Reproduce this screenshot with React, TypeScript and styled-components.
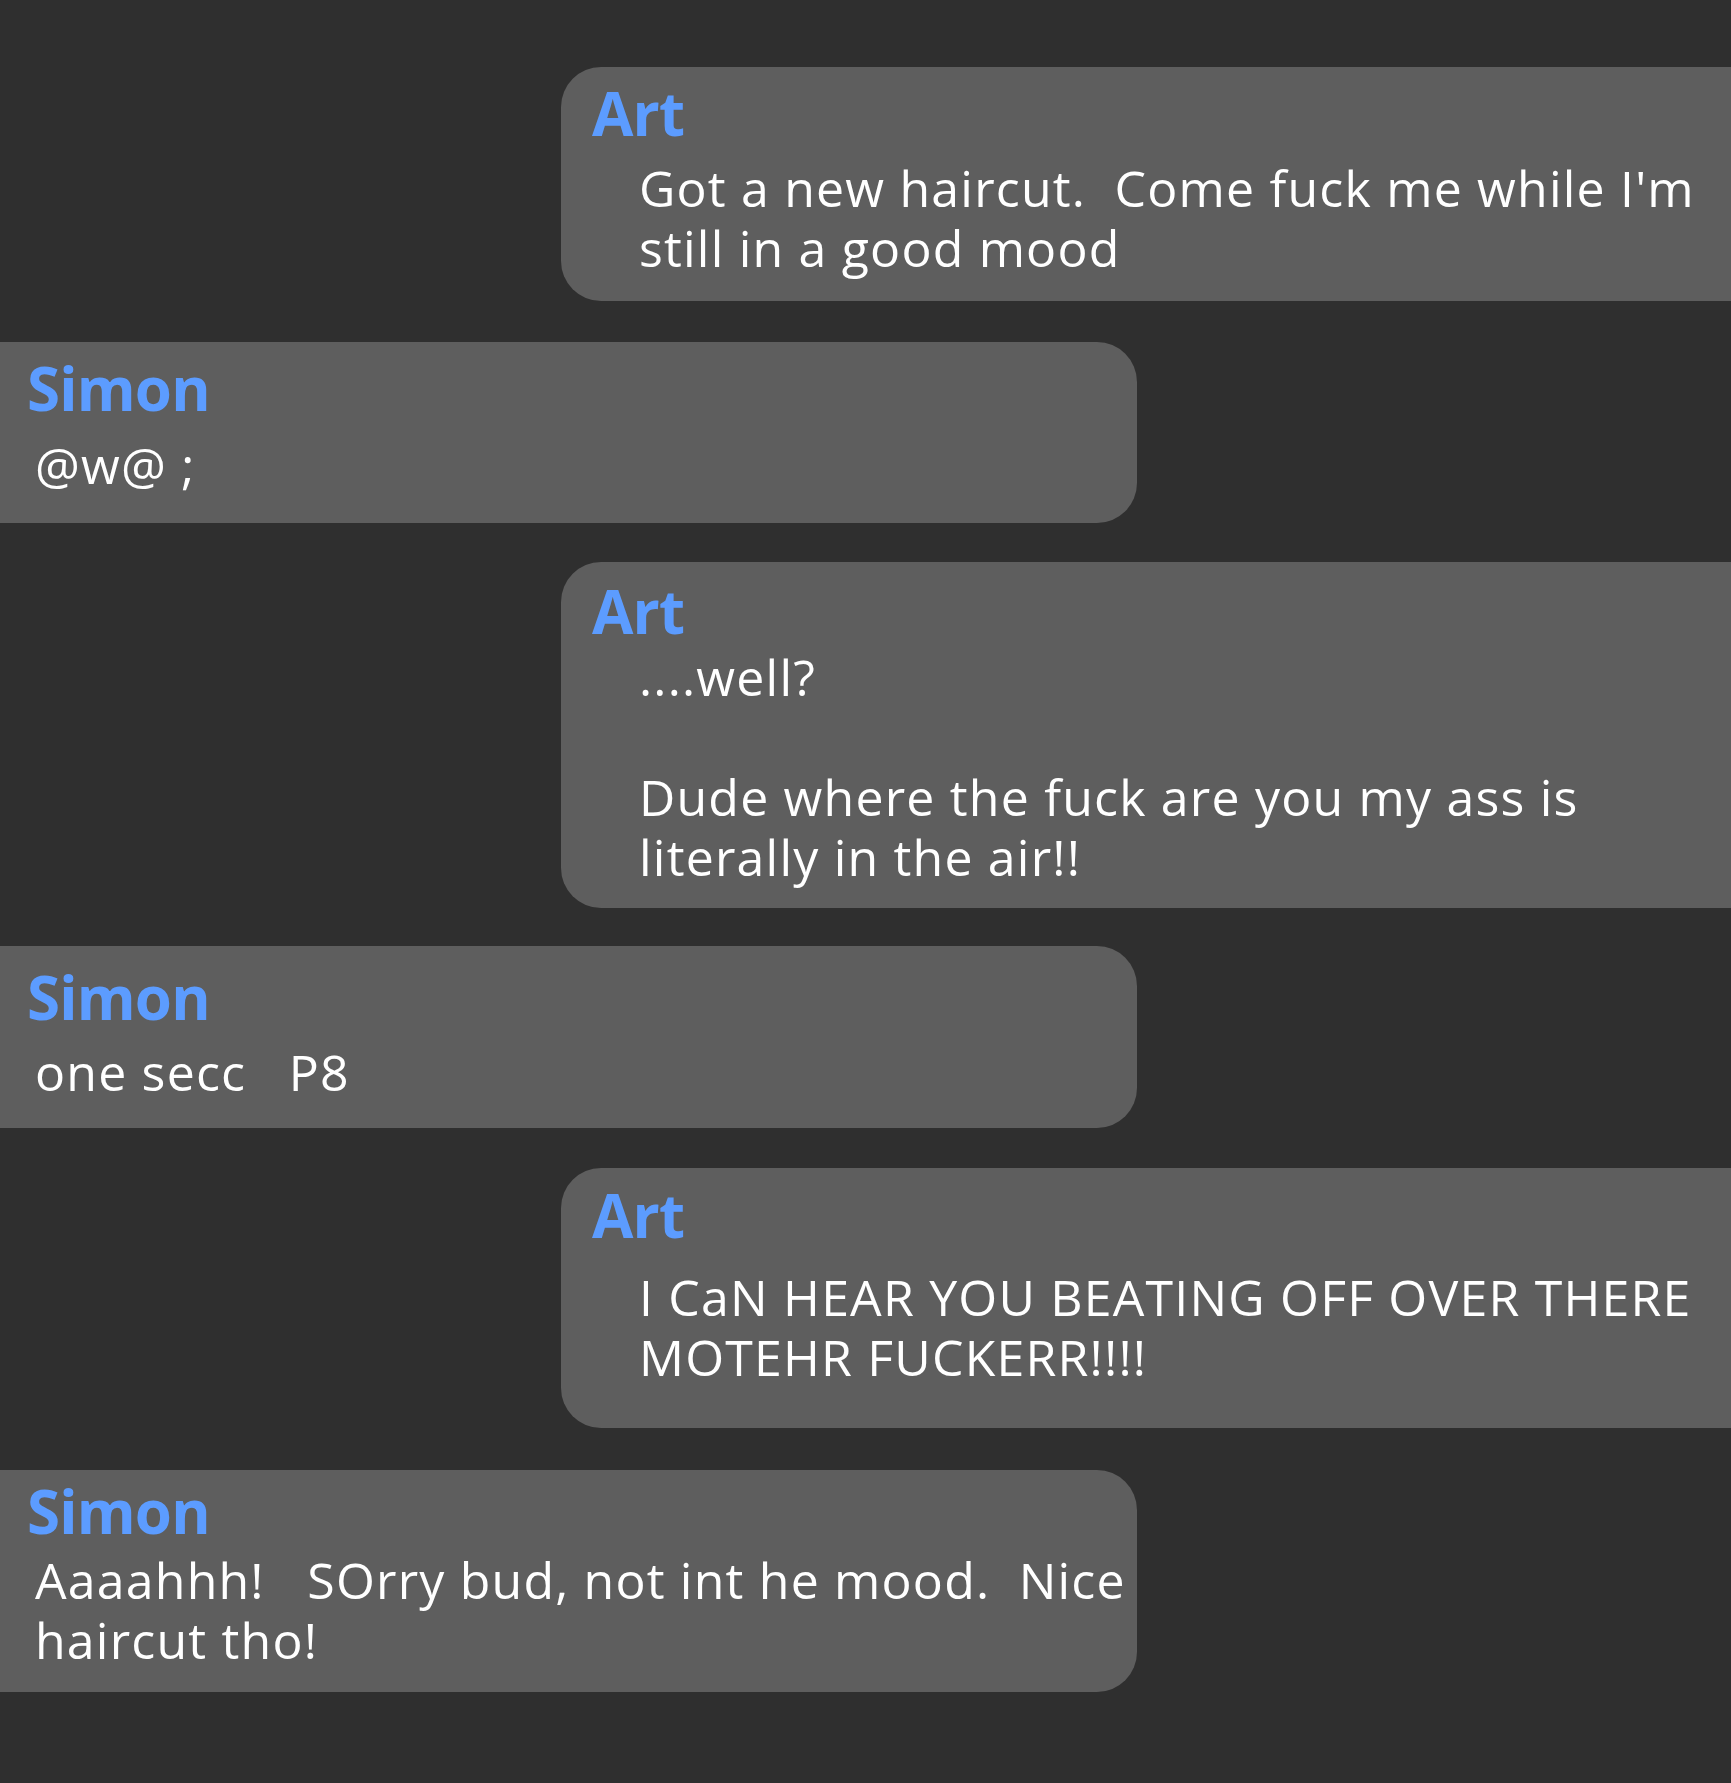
import styled, {createGlobalStyle} from "styled-components";

const GlobalStyle = createGlobalStyle`
  html, body {
    margin: 0;
    padding: 0;
    background-color: #2f2f2f;
  }
`

const Page = styled.div`
  min-height: 100vh;
  background-color: #2f2f2f;
  padding-top: 67px;
  box-sizing: border-box;
  display: flex;
  flex-direction: column;
  font-family: "Open Sans", "Noto Sans", sans-serif;
  overflow: hidden;
`

const Bubble = styled.div<{ $mine: boolean; $mt: number; $pt: number; $pb: number }>`
  display: flex;
  flex-direction: column;
  box-sizing: border-box;
  background-color: #5e5e5e;
  margin-top: ${p => p.$mt}px;
  padding-top: ${p => p.$pt}px;
  padding-bottom: ${p => p.$pb}px;
  ${p => p.$mine ? `
    margin-left: 561px;
    padding-left: 31px;
    border-radius: 40px 0 0 40px;
  ` : `
    width: 1137px;
    padding-left: 27px;
    border-radius: 0 40px 40px 0;
  `}
`

const Name = styled.div`
  color: #5c9cff;
  font-weight: 700;
  font-size: 60px;
  line-height: 60px;
  height: 60px;
  letter-spacing: -0.8px;
`

const Text = styled.div<{ $indent: number; $gap: number }>`
  color: #ffffff;
  font-size: 50px;
  line-height: 60px;
  letter-spacing: 1.2px;
  white-space: pre;
  margin-top: ${p => p.$gap}px;
  padding-left: ${p => p.$indent}px;
`

type Message = {
    from: string;
    lines: string[];
    mt: number;
    pt: number;
    gap: number;
    pb: number;
}

const messages: Message[] = [
    {from: "Art", lines: ["Got a new haircut.  Come fuck me while I'm", "still in a good mood"], mt: 0, pt: 16, gap: 15, pb: 23},
    {from: "Simon", lines: ["@w@ ;"], mt: 41, pt: 16, gap: 17, pb: 28},
    {from: "Art", lines: ["....well?", " ", "Dude where the fuck are you my ass is", "literally in the air!!"], mt: 39, pt: 19, gap: 6, pb: 21},
    {from: "Simon", lines: ["one secc   P8"], mt: 38, pt: 21, gap: 15, pb: 26},
    {from: "Art", lines: ["I CaN HEAR YOU BEATING OFF OVER THERE", "MOTEHR FUCKERR!!!!"], mt: 40, pt: 17, gap: 22, pb: 41},
    {from: "Simon", lines: ["Aaaahhh!   SOrry bud, not int he mood.  Nice", "haircut tho!"], mt: 42, pt: 11, gap: 9, pb: 22},
]

const App = () => {
    return (
        <>
            <GlobalStyle/>
            <Page>
                {messages.map((m, i) => {
                    const mine = m.from === "Art";
                    return (
                        <Bubble key={i} $mine={mine} $mt={m.mt} $pt={m.pt} $pb={m.pb}>
                            <Name>{m.from}</Name>
                            <Text $indent={mine ? 47 : 8} $gap={m.gap}>
                                {m.lines.join("\n")}
                            </Text>
                        </Bubble>
                    )
                })}
            </Page>
        </>
    )
}

export default App
